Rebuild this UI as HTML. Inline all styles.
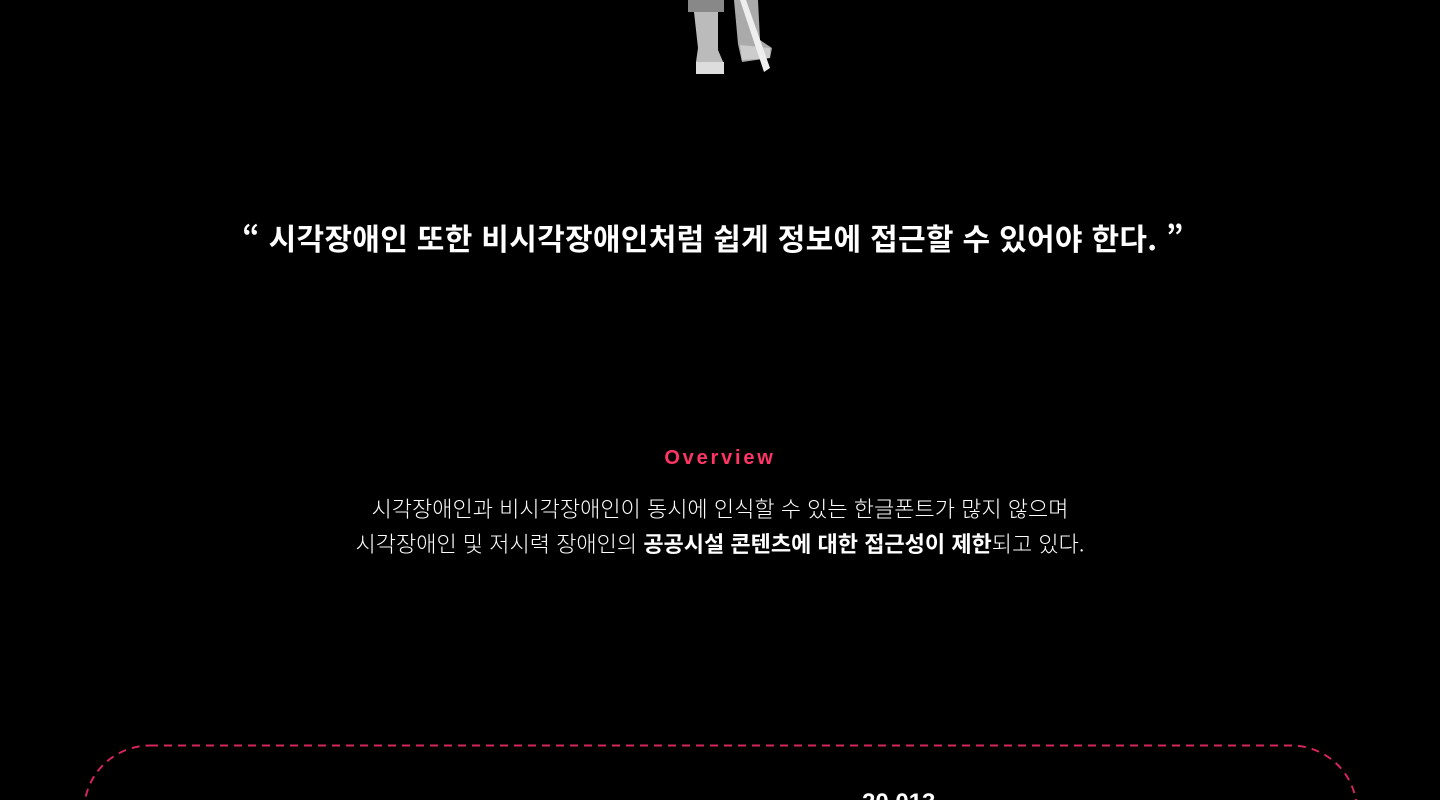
<!DOCTYPE html>
<html lang="ko"><head><meta charset="utf-8">
<style>
html,body{margin:0;padding:0;background:#000;width:1440px;height:800px;overflow:hidden;}
body{font-family:"Liberation Sans","Noto Sans CJK KR",sans-serif;color:#fff;}
.wrap{position:relative;width:1440px;height:800px;overflow:hidden;}
.quote{position:absolute;top:215px;left:-7px;width:1440px;text-align:center;font-size:30px;font-weight:700;font-family:"Noto Sans CJK KR",sans-serif;line-height:44px;letter-spacing:0.3px;}
.ov{position:absolute;top:447px;left:0;width:1440px;text-align:center;font-size:20px;font-weight:700;color:#ff3565;letter-spacing:2.8px;font-family:"Liberation Sans",sans-serif;}
.body{position:absolute;top:491px;left:0;width:1440px;text-align:center;font-size:22px;font-weight:300;line-height:35px;font-family:"Noto Sans CJK KR",sans-serif;}
.body b{font-weight:700;}
.num{position:absolute;left:862px;top:789px;font-size:24px;font-weight:700;line-height:28px;font-family:"Liberation Sans",sans-serif;}
</style></head><body><div class="wrap">
<svg style="position:absolute;left:680px;top:0" width="110" height="80" viewBox="0 0 110 80">
<rect x="8" y="0" width="36" height="12" fill="#888"/>
<path d="M14 12 L38 12 L38 50 L44 64 L44 74 L16 74 L16 62 L18 48 Z" fill="#bbb"/>
<path d="M16 62 L44 62 L44 74 L16 74Z" fill="#ddd"/>
<path d="M54 0 L78 0 L80 40 L92 48 L90 58 L62 62 L58 44 Z" fill="#aaa"/>
<path d="M60 45 L90 48 L90 58 L62 60Z" fill="#ccc"/>
<path d="M60 0 L66 0 L90 68 L84 72 Z" fill="#eee"/>
</svg>
<div class="quote">“ 시각장애인 또한 비시각장애인처럼 쉽게 정보에 접근할 수 있어야 한다. ”</div>
<div class="ov">Overview</div>
<div class="body">시각장애인과 비시각장애인이 동시에 인식할 수 있는 한글폰트가 많지 않으며<br>시각장애인 및 저시력 장애인의 <b>공공시설 콘텐츠에 대한 접근성이 제한</b>되고 있다.</div>
<svg style="position:absolute;left:0;top:740px" width="1440" height="60">
<rect x="84" y="5.5" width="1273" height="200" rx="66" ry="66" fill="none" stroke="#d3265a" stroke-width="2" stroke-dasharray="8 6"/>
</svg>
<div class="num">20,013</div>
</div></body></html>
